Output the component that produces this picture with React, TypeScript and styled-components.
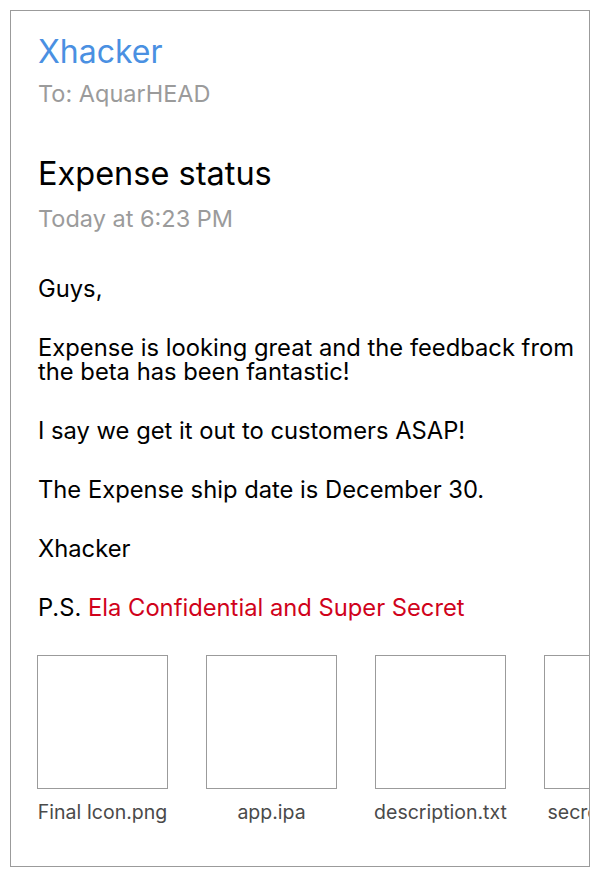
import React from "react";
import styled, { createGlobalStyle } from "styled-components";

const Global = createGlobalStyle`
  html, body { margin: 0; padding: 0; background: #ffffff; }
  body { font-family: Inter, "Noto Sans", sans-serif; -webkit-font-smoothing: antialiased; }
`;

const Card = styled.div`
  box-sizing: border-box;
  margin: 10px;
  width: 580px;
  height: 857px;
  border: 1px solid #9b9b9b;
  overflow: hidden;
  padding: 23px 0 0 27px;
  display: flex;
  flex-direction: column;
`;

const Sender = styled.div`
  font-size: 32px;
  line-height: 36px;
  color: #4a90e2;
`;

const Meta = styled.div<{ $top: number }>`
  margin-top: ${(p) => p.$top}px;
  font-size: 23.5px;
  line-height: 28px;
  color: #9b9b9b;
`;

const Subject = styled.div`
  margin-top: 47px;
  font-size: 32.5px;
  line-height: 38px;
  color: #000000;
`;

const Body = styled.div`
  margin-top: 44px;
  padding-right: 10px;
  display: flex;
  flex-direction: column;
  gap: 35px;
  font-size: 23.75px;
  line-height: 24px;
  color: #000000;
`;

const Para = styled.p`
  margin: 0;
`;

const Secret = styled.span`
  color: #d0021b;
`;

const Attachments = styled.div`
  margin: 35px 0 0 -1px;
  display: flex;
  gap: 38px;
`;

const Attachment = styled.div`
  flex: 0 0 131px;
  min-width: 0;
  display: flex;
  flex-direction: column;
  align-items: center;
`;

const Thumb = styled.div`
  box-sizing: border-box;
  width: 131px;
  height: 134px;
  border: 1px solid #9b9b9b;
  background: #ffffff;
`;

const FileName = styled.div`
  margin-top: 11px;
  font-size: 19.5px;
  line-height: 24px;
  color: #4a4a4a;
  white-space: nowrap;
`;

const files = ["Final Icon.png", "app.ipa", "description.txt", "secret.sketch"];

export default function App() {
  return (
    <>
      <Global />
      <Card>
        <Sender>Xhacker</Sender>
        <Meta $top={10}>To: AquarHEAD</Meta>
        <Subject>Expense status</Subject>
        <Meta $top={12}>Today at 6:23 PM</Meta>
        <Body>
          <Para>Guys,</Para>
          <Para>Expense is looking great and the feedback from the beta has been fantastic!</Para>
          <Para>I say we get it out to customers ASAP!</Para>
          <Para>The Expense ship date is December 30.</Para>
          <Para>Xhacker</Para>
          <Para>
            P.S. <Secret>Ela Confidential and Super Secret</Secret>
          </Para>
        </Body>
        <Attachments>
          {files.map((f) => (
            <Attachment key={f}>
              <Thumb />
              <FileName>{f}</FileName>
            </Attachment>
          ))}
        </Attachments>
      </Card>
    </>
  );
}
